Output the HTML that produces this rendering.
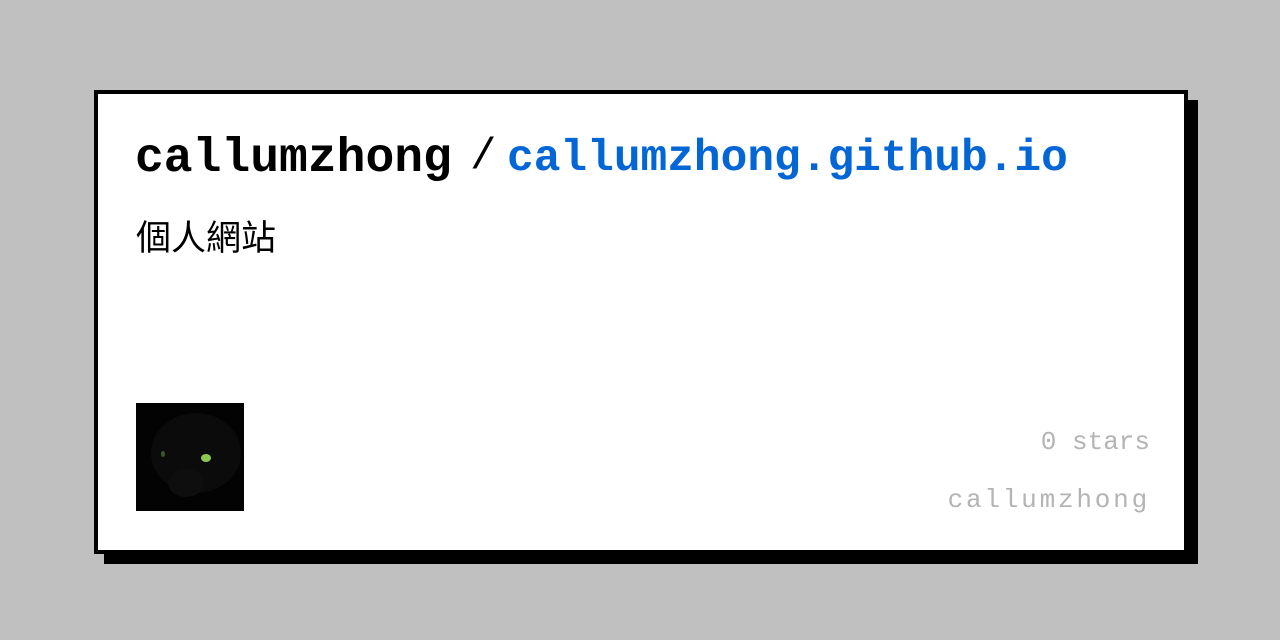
<!DOCTYPE html>
<html><head><meta charset="utf-8"><style>
html,body{margin:0;padding:0;width:1280px;height:640px;background:#c0c0c0;overflow:hidden;position:relative;font-family:"Liberation Mono",monospace}
.shadow{position:absolute;left:104px;top:100px;width:1094px;height:464px;background:#000}
.card{position:absolute;left:94px;top:90px;width:1086px;height:456px;background:#fff;border:4px solid #000}
.t{position:absolute;white-space:nowrap;line-height:1}
</style></head><body>
<div class="shadow"></div>
<div class="card"></div>
<div class="t" style="left:135px;top:135px;font-size:48px;font-weight:bold;color:#000">callumzhong</div>
<div class="t" style="left:470px;top:135px;font-size:44px;color:#000">/</div>
<div class="t" style="left:507px;top:137px;font-size:44.5px;font-weight:bold;color:#0366d6">callumzhong.github.io</div>
<div class="t" style="left:136px;top:221px;font-size:35px;font-family:'Liberation Sans','Noto Sans CJK TC',sans-serif;color:#000">個人網站</div>
<svg style="position:absolute;left:136px;top:403px" width="108" height="108" viewBox="0 0 108 108">
<rect width="108" height="108" fill="#030303"/>
<ellipse cx="60" cy="50" rx="45" ry="40" fill="#0b0b0b"/>
<ellipse cx="50" cy="80" rx="18" ry="14" fill="#0e0e0e"/>
<ellipse cx="70" cy="55" rx="5" ry="4" fill="#8cc850"/>
<ellipse cx="27" cy="51" rx="2" ry="3" fill="#3a5a22"/>
</svg>
<div class="t" style="right:130px;top:429px;font-size:26px;color:#b4b4b4">0 stars</div>
<div class="t" style="right:130px;top:487px;font-size:26px;color:#b4b4b4;letter-spacing:2.8px">callumzhong</div>
</body></html>
